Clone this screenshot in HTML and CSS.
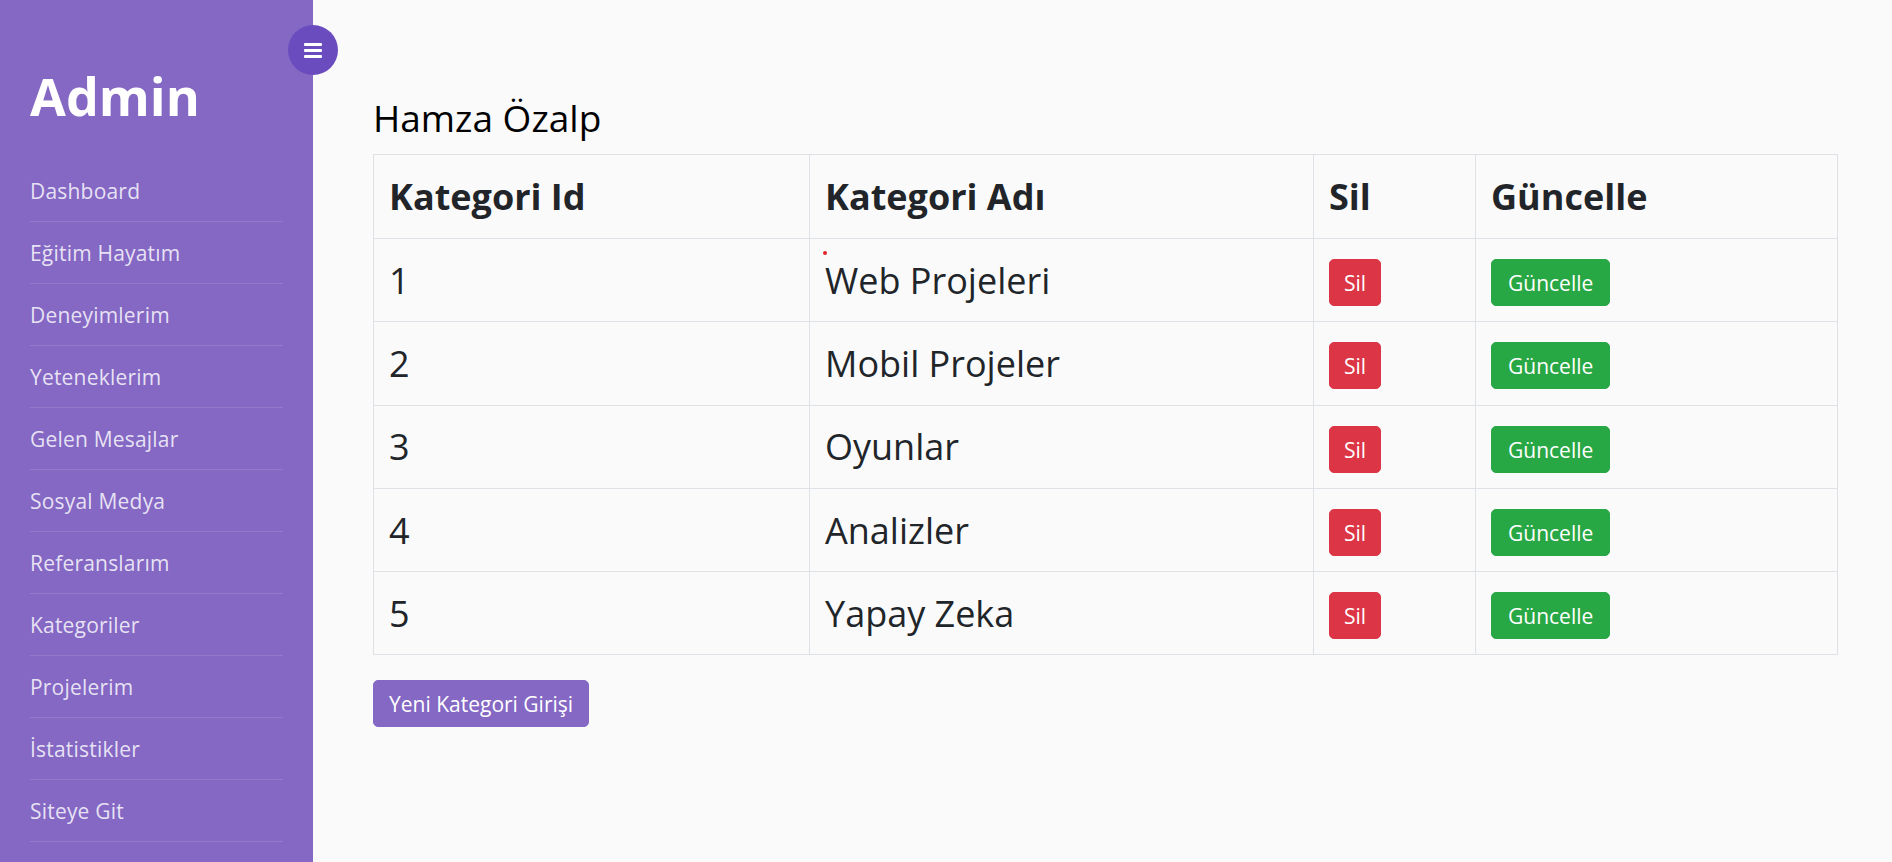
FILE: index.html
```html
<!DOCTYPE html>
<html lang="tr">
<head>
<meta charset="utf-8">
<title>Admin - Kategoriler</title>
<link rel="stylesheet" href="styles.css">
</head>
<body>
<div class="wrapper">
  <nav class="sidebar">
    <button class="toggle" type="button" aria-label="Menü">
      <svg width="18" height="15" viewBox="0 0 18 15"><rect x="0" y="0" width="18" height="3" rx="1" fill="#fff"/><rect x="0" y="6" width="18" height="3" rx="1" fill="#fff"/><rect x="0" y="12" width="18" height="3" rx="1" fill="#fff"/></svg>
    </button>
    <h1 class="logo">Admin</h1>
    <ul class="menu">
      <li><a href="#">Dashboard</a></li>
      <li><a href="#">Eğitim Hayatım</a></li>
      <li><a href="#">Deneyimlerim</a></li>
      <li><a href="#">Yeteneklerim</a></li>
      <li><a href="#">Gelen Mesajlar</a></li>
      <li><a href="#">Sosyal Medya</a></li>
      <li><a href="#">Referanslarım</a></li>
      <li><a href="#">Kategoriler</a></li>
      <li><a href="#">Projelerim</a></li>
      <li><a href="#">İstatistikler</a></li>
      <li><a href="#">Siteye Git</a></li>
    </ul>
  </nav>
  <main class="content">
    <h2 class="title">Hamza Özalp</h2>
    <table class="grid">
      <thead>
        <tr><th class="c1">Kategori Id</th><th class="c2">Kategori Adı</th><th class="c3">Sil</th><th class="c4">Güncelle</th></tr>
      </thead>
      <tbody>
        <tr><td>1</td><td class="name"><span class="dot"></span>Web Projeleri</td><td><a class="btn danger" href="#">Sil</a></td><td><a class="btn success" href="#">Güncelle</a></td></tr>
        <tr><td>2</td><td class="name">Mobil Projeler</td><td><a class="btn danger" href="#">Sil</a></td><td><a class="btn success" href="#">Güncelle</a></td></tr>
        <tr><td>3</td><td class="name">Oyunlar</td><td><a class="btn danger" href="#">Sil</a></td><td><a class="btn success" href="#">Güncelle</a></td></tr>
        <tr><td>4</td><td class="name">Analizler</td><td><a class="btn danger" href="#">Sil</a></td><td><a class="btn success" href="#">Güncelle</a></td></tr>
        <tr><td>5</td><td class="name">Yapay Zeka</td><td><a class="btn danger" href="#">Sil</a></td><td><a class="btn success" href="#">Güncelle</a></td></tr>
      </tbody>
    </table>
    <a class="btn primary" href="#">Yeni Kategori Girişi</a>
  </main>
</div>
</body>
</html>
```
FILE: styles.css
```css
* { box-sizing: border-box; }
html, body { margin: 0; padding: 0; }
body {
  font-family: "Open Sans", "DejaVu Sans", sans-serif;
  background: #fafafa;
  color: #212529;
}
.wrapper {
  display: flex;
  min-height: 100vh;
}
.sidebar {
  position: relative;
  width: 313px;
  flex: 0 0 313px;
  background: #8468c4;
  padding: 70px 30px 0 30px;
}
.toggle {
  position: absolute;
  top: 25px;
  right: -25px;
  width: 50px;
  height: 50px;
  border: none;
  border-radius: 50%;
  background: #6a4cbe;
  display: flex;
  align-items: center;
  justify-content: center;
  padding: 0;
  cursor: pointer;
}
.toggle svg { display: block; }
.logo {
  margin: 0 0 38px 0;
  font-size: 52px;
  line-height: 52px;
  font-weight: 700;
  color: #fff;
  letter-spacing: 0;
}
.menu {
  list-style: none;
  margin: 0;
  padding: 0;
}
.menu li {
  border-bottom: 1px solid rgba(255, 255, 255, 0.12);
}
.menu a {
  display: block;
  padding: 17px 0 15px 0;
  font-size: 21px;
  line-height: 29px;
  color: rgba(255, 255, 255, 0.82);
  text-decoration: none;
  letter-spacing: 0.2px;
}
.content {
  flex: 1;
  padding: 96px 54px 40px 60px;
}
.title {
  margin: 0 0 15px 0;
  font-size: 37px;
  line-height: 43px;
  font-weight: 400;
  color: #000;
}
.grid {
  width: 100%;
  border-collapse: collapse;
  margin-bottom: 25px;
}
.grid th, .grid td {
  border: 1px solid #dee2e6;
  padding: 0 15px;
  text-align: left;
  vertical-align: middle;
}
.grid th {
  height: 84px;
  font-size: 36px;
  font-weight: 700;
  color: #212529;
}
.grid td {
  height: 83.3px;
  font-size: 36px;
  font-weight: 400;
  color: #212529;
}
.c1 { width: 436px; }
.c2 { width: 504px; }
.c3 { width: 162px; }
.name { position: relative; }
.dot {
  position: absolute;
  left: 13px;
  top: 12px;
  width: 4px;
  height: 4px;
  border-radius: 50%;
  background: #e0242c;
}
.btn {
  display: inline-block;
  padding: 8px 15px 7px 15px;
  font-size: 21px;
  line-height: 30px;
  font-weight: 400;
  color: #fff;
  text-decoration: none;
  border-radius: 5px;
  border: 1px solid transparent;
  vertical-align: middle;
}
.danger { background: #dc3545; border-color: #dc3545; padding-left: 14px; padding-right: 14px; }
.success { background: #28a745; border-color: #28a745; padding-left: 16px; padding-right: 16px; }
.primary { background: #8468c4; border-color: #8468c4; padding-left: 15px; padding-right: 15px; }
```
